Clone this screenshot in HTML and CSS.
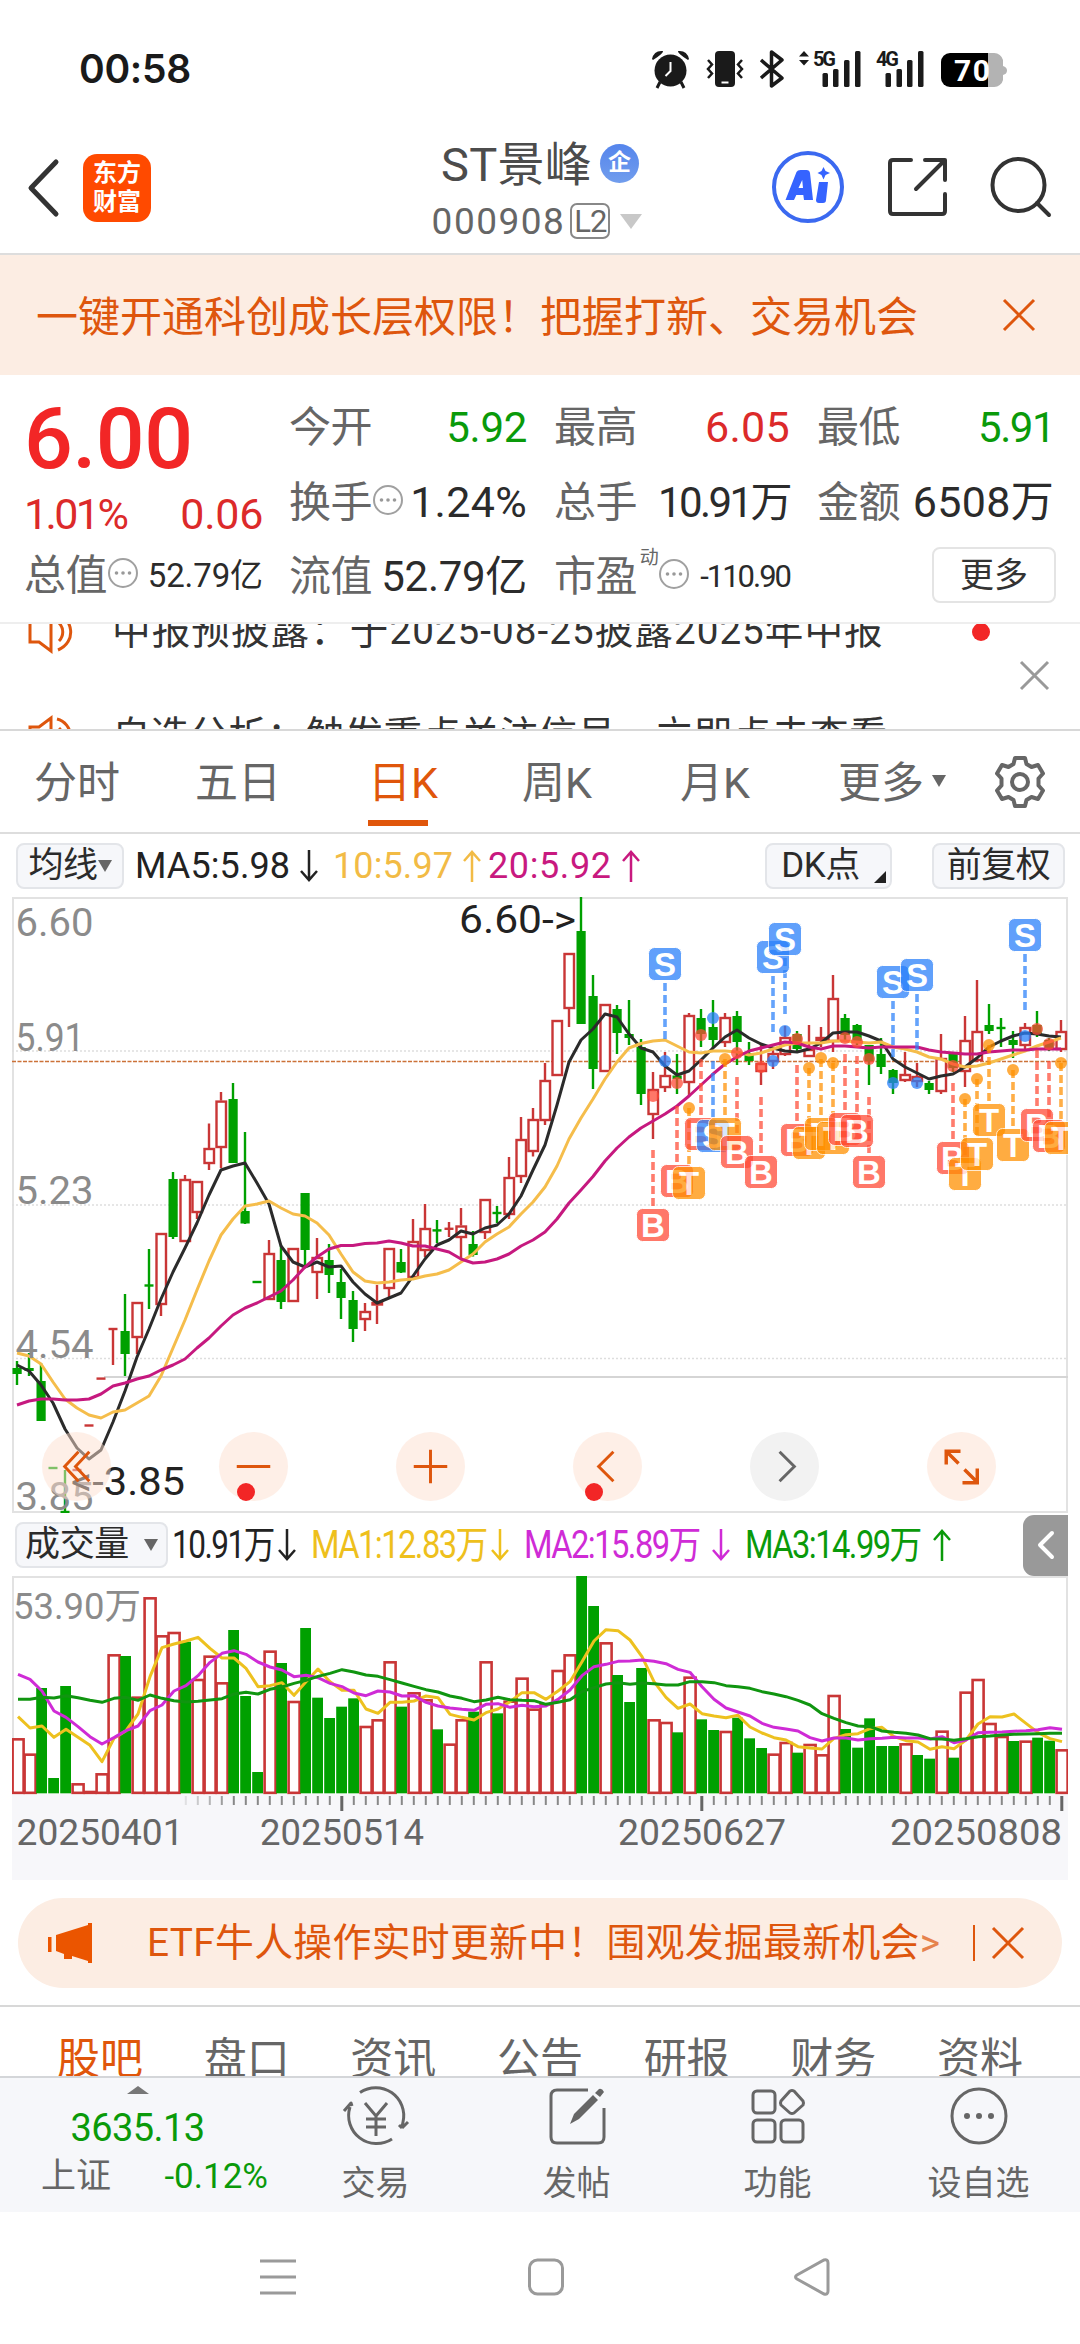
FILE: index.html
```html
<!DOCTYPE html>
<html lang="zh-CN">
<head>
<meta charset="utf-8">
<title>ST景峰 000908</title>
<link rel="stylesheet" href="styles.css">
</head>
<body>
<svg class="defs" aria-hidden="true">
  <symbol id="down" viewBox="0 0 20 34"><path d="M10 1v30M2 22l8 9 8-9"/></symbol>
  <symbol id="up" viewBox="0 0 20 34"><path d="M10 33V3M2 12l8-9 8 9"/></symbol>
  <symbol id="more" viewBox="0 0 32 32"><circle cx="16" cy="16" r="14" fill="none" stroke="#a0a0a0" stroke-width="2"/><g fill="#999"><circle cx="9.500" cy="16" r="1.800"/><circle cx="16" cy="16" r="1.800"/><circle cx="22.500" cy="16" r="1.800"/></g></symbol>
  <symbol id="horn" viewBox="0 0 54 44"><path d="M3 12h9L24 3v38L12 32H3zM32 13c5 5 5 13 0 18M30 4c16 4 20 28 1 36"/></symbol>
</svg>

<header class="status">
  <span class="clock">00:58</span>
  <svg class="status-icons" viewBox="0 0 360 40" width="360" height="40">
    <g fill="#1a1a1a">
      <circle cx="20.500" cy="20.500" r="16"/>
      <path d="M2 9Q4 0 13 1Q14 3 3 10ZM39 9Q37 0 28 1Q27 3 38 10Z"/>
      <path d="M10 32l-3 6M31 32l3 6" stroke="#1a1a1a" stroke-width="3"/>
      <rect x="65" y="1" width="20" height="36" rx="4"/>
      <path d="M149 6.500l5-5.500 5 5.500zM149 10l5 5.500 5-5.500z"/>
      <rect x="172.500" y="23" width="5.500" height="14" rx="1.500"/><rect x="183" y="19" width="5.500" height="18" rx="1.500"/><rect x="194" y="10" width="5.500" height="27" rx="1.500"/><rect x="205" y="1" width="5.500" height="36" rx="1.500"/>
      <rect x="235.500" y="23" width="5.500" height="14" rx="1.500"/><rect x="246.500" y="19" width="5.500" height="18" rx="1.500"/><rect x="257" y="10" width="5.500" height="27" rx="1.500"/><rect x="268" y="1" width="5.500" height="36" rx="1.500"/>
    </g>
    <path d="M20.500 12v9l-5 5" fill="none" stroke="#fff" stroke-width="2"/>
    <path d="M71.500 32.500h7" stroke="#fff" stroke-width="2"/>
    <path d="M58 10l4 4.500-4 4.500 4 4.500-4 4.500M92 10l-4 4.500 4 4.500-4 4.500 4 4.500" fill="none" stroke="#1a1a1a" stroke-width="2.500"/>
    <path d="M111 10l21 18-10.500 8V2L132 10 111 28" fill="none" stroke="#1a1a1a" stroke-width="3.500" stroke-linejoin="round"/>
    <text class="net" x="163" y="16" textLength="23">5G</text>
    <text class="net" x="226" y="16" textLength="23">4G</text>
    <path d="M338 3h6a9 9 0 0 1 9 7v6q4 1 4 4.500t-4 4.500v5a9 9 0 0 1-9 7h-6z" fill="#b3b3b3"/>
    <path d="M338 3v34h-38a9 9 0 0 1-9-9V12a9 9 0 0 1 9-9z"/>
    <text class="charge" x="304" y="31" textLength="36">70</text>
  </svg>
</header>

<nav class="titlebar">
  <div class="left">
    <svg width="34" height="60" viewBox="0 0 34 60" class="line"><path d="M29 4L4 30l25 26" stroke-width="5"/></svg>
    <div class="logo"><span>东方</span><span>财富</span></div>
  </div>
  <div class="name">
    <div class="name-row">ST景峰<span class="corp">企</span></div>
    <div class="code-row"><span class="code">000908</span><span class="level">L2</span><i class="tri light"></i></div>
  </div>
  <div class="actions">
    <svg width="74" height="74" viewBox="0 0 74 74">
      <circle cx="37" cy="37" r="34" fill="#fff" stroke="#3b69f0" stroke-width="4"/>
      <path d="M14.500 50L25.500 22q1-2 4-2h6q3 0 3.500 3L42 50h-9l-.7-5h-7L23 50zM27.500 38h4.500l-.8-8z" fill="#3563ff" fill-rule="evenodd"/>
      <path d="M48 32h9l-2 18q0 3-3 3h-4q-3 0-3-3zM52.500 17l2 4 4.500 2-4.500 2-2 4.500-2-4.500-4-2 4-2z" fill="#3563ff"/>
    </svg>
    <svg width="62" height="62" viewBox="0 0 62 62" class="line"><path d="M24 4H6Q3 4 3 7v48q0 3 3 3h49q3 0 3-3V38M38 4h20v20M57 5L29 33" stroke-width="4"/></svg>
    <svg width="62" height="62" viewBox="0 0 62 62" class="line"><circle cx="28.500" cy="29" r="26" stroke-width="4"/><path d="M47 47l12 12" stroke-width="4"/></svg>
  </div>
</nav>

<section class="promo">
  <span>一键开通科创成长层权限！把握打新、交易机会</span>
  <svg width="34" height="34" viewBox="0 0 34 34"><path d="M2 2l30 30M32 2L2 32"/></svg>
</section>

<section class="quote">
  <div class="price-col">
    <div class="price">6.00</div>
    <div class="pair red"><span class="pct">1.01%</span><span>0.06</span></div>
    <div class="pair"><span class="lbl">总值<svg class="dots"><use href="#more"/></svg></span><span class="v-small">52.79亿</span></div>
  </div>
  <div class="grid">
    <div class="pair"><span class="lbl">今开</span><span class="green">5.92</span></div>
    <div class="pair"><span class="lbl">最高</span><span class="red wide">6.05</span></div>
    <div class="pair"><span class="lbl">最低</span><span class="green n1">5.91</span></div>
    <div class="pair"><span class="lbl">换手<svg class="dots"><use href="#more"/></svg></span><span class="wide">1.24%</span></div>
    <div class="pair"><span class="lbl">总手</span><span class="n2">10.91万</span></div>
    <div class="pair"><span class="lbl">金额</span><span class="wide">6508万</span></div>
    <div class="pair"><span class="lbl">流值</span><span>52.79亿</span></div>
    <div class="pair"><span class="lbl">市盈<sup>动</sup><svg class="dots"><use href="#more"/></svg></span><span class="v-pe">-110.90</span></div>
    <div class="more-cell"><button class="more-btn">更多</button></div>
  </div>
</section>

<section class="notices">
  <div class="notice-list">
    <div class="notice"><svg class="horn"><use href="#horn"/></svg><span class="report">中报预披露：于2025-08-25披露2025年中报</span><i class="dot"></i></div>
    <div class="notice"><svg class="horn"><use href="#horn"/></svg><span>自选分析：触发重点关注信号，立即点击查看</span></div>
  </div>
  <svg class="close" width="32" height="32" viewBox="0 0 32 32"><path d="M2 2l27 27M29 2L2 29"/></svg>
</section>

<nav class="periods">
  <span>分时</span><span class="w2">五日</span><span class="on">日K</span><span>周K</span><span>月K</span><span>更多<i class="tri small"></i></span>
  <svg class="gear" width="50" height="54" viewBox="0 0 54 54"><path d="M22 3h10l1.500 6 5 3 6.500-2 5 8.500-4.500 5v7l4.500 5-5 8.500-6.500-2-5 3L32 51H22l-1.500-6-5-3L9 44l-5-8.500 4.500-5v-7L4 18.500 9 10l6.500 2 5-3z"/><circle cx="27" cy="27" r="8"/></svg>
</nav>

<section class="indicators">
  <span class="pill">均线<i class="tri"></i></span>
  <span class="ma k">MA5:5.98<svg><use href="#down"/></svg></span>
  <span class="ma y">10:5.97<svg><use href="#up"/></svg></span>
  <span class="ma m">20:5.92<svg><use href="#up"/></svg></span>
  <span class="pill dk">DK点<i class="corner"></i></span>
  <span class="pill fq">前复权</span>
</section>

<section class="kline">
  <svg id="kline" viewBox="0 0 1056 616" width="1056" height="616"></svg>
  <div class="controls">
    <button><svg viewBox="0 0 70 70"><path d="M37 20L23 35l14 15M48 20L34 35l14 15"/></svg></button>
    <button><svg viewBox="0 0 70 70"><path d="M18 35h34"/></svg><i class="dot"></i></button>
    <button><svg viewBox="0 0 70 70"><path d="M18 35h34M35 18v34"/></svg></button>
    <button><svg viewBox="0 0 70 70"><path d="M41 20L26 35l15 15"/></svg><i class="dot shifted"></i></button>
    <button class="off"><svg viewBox="0 0 70 70"><path d="M30 20l15 15-15 15"/></svg></button>
    <button><svg viewBox="0 0 70 70"><path d="M19.500 33V19.500H34M20 20l12 12M38 38l12 12M51 37v14.500H36" stroke-width="3.500"/></svg></button>
  </div>
</section>

<section class="vol-head">
  <span class="pill vol">成交量<i class="tri"></i></span>
  <span class="ma k"><b>10.91万</b><svg><use href="#down"/></svg></span>
  <span class="ma g1"><b>MA1:12.83万</b><svg><use href="#down"/></svg></span>
  <span class="ma p"><b>MA2:15.89万</b><svg><use href="#down"/></svg></span>
  <span class="ma g"><b>MA3:14.99万</b><svg><use href="#up"/></svg></span>
  <span class="handle"><svg width="20" height="30" viewBox="0 0 20 30"><path d="M16 3L4 15l12 12"/></svg></span>
</section>
<section class="volume">
  <svg id="volume" viewBox="0 0 1056 304" width="1056" height="304"></svg>
</section>

<section class="etf">
  <svg width="46" height="40" viewBox="0 0 46 40"><path d="M0 14h3.500v15H0zM8 12L40 2V0h4v40h-4v-2l-16-5v3h-8v-5l-8-3z" fill="#eb5500"/></svg>
  <span class="etf-text">ETF牛人操作实时更新中！围观发掘最新机会<b>&gt;</b></span>
  <i class="bar"></i>
  <svg width="34" height="34" viewBox="0 0 34 34" class="x"><path d="M2 2l30 30M32 2L2 32"/></svg>
</section>

<nav class="tabs"><span class="on">股吧</span><span>盘口</span><span>资讯</span><span>公告</span><span>研报</span><span>财务</span><span>资料</span></nav>

<footer class="dock">
  <div class="index">
    <i class="tri up"></i>
    <div class="idx">3635.13</div>
    <div class="idx-row"><span>上证</span><span class="green">-0.12%</span></div>
  </div>
  <div class="item"><svg viewBox="0 0 68 60"><path d="M18 6.500A28 28 0 0 1 61 36l-1 5M60 42l-3-3M60 42l6-6M50 53A28 28 0 0 1 8 21M2 25l7-8 1 3M23 17l11 13 11-13M34 30v20M24 33h20M24 41h20"/></svg><span>交易</span></div>
  <div class="item"><svg viewBox="0 0 68 60"><path d="M45 4H14Q8 4 8 10v41q0 6 6 6h41q6 0 6-6V22"/><path d="M27 38l4-10L50 9l5 5-19 19zM52 7l4-4q3-1 5 3l-4 5z" fill="#666" stroke="none"/></svg><span>发帖</span></div>
  <div class="item"><svg viewBox="0 0 68 60"><rect x="9" y="5" width="22" height="22" rx="4"/><rect x="9" y="34" width="22" height="22" rx="4"/><rect x="37" y="34" width="22" height="22" rx="4"/><path d="M46 5l-9 10q-1 2 0 4l9 8q2 1 4 0l9-8q1-2 0-4l-9-10q-2-1-4 0z"/></svg><span>功能</span></div>
  <div class="item"><svg viewBox="0 0 68 60"><circle cx="34" cy="30" r="27"/><g fill="#666" stroke="none"><circle cx="22" cy="30" r="3"/><circle cx="34" cy="30" r="3"/><circle cx="46" cy="30" r="3"/></g></svg><span>设自选</span></div>
</footer>

<div class="sysnav">
  <svg width="40" height="40" viewBox="0 0 40 40"><path d="M2 4h36M2 20h36M2 36h36"/></svg>
  <svg width="40" height="40" viewBox="0 0 40 40"><rect x="3.500" y="3" width="33" height="34" rx="8"/></svg>
  <svg width="40" height="40" viewBox="0 0 40 40"><path d="M32 3Q36 2 36 6v28q0 4-4 3L5 22q-3-2 0-4z"/></svg>
</div>
<script src="chart.js"></script>
</body>
</html>
```
FILE: styles.css
```css
* { box-sizing: border-box; }
body { margin: 0; width: 1080px; height: 2344px; overflow: hidden; background: #fff; color: #2b2b2b; font-family: Roboto, "Noto Sans CJK SC", sans-serif; line-height: 1; }
button { font: inherit; color: inherit; padding: 0; border: 0; background: none; }
.defs { position: absolute; width: 0; height: 0; }
.line { fill: none; stroke: #333; stroke-linecap: round; stroke-linejoin: round; }
.red { color: #dc2a2a; }
.green { color: #0a9a0a; }
i { font-style: normal; display: inline-block; }
.tri { width: 0; height: 0; border: solid transparent; border-width: 12px 7px 0; border-top-color: #666; }
.tri.light { border-width: 15px 11px 0; border-top-color: #c8c8c8; margin-left: 10px; }
.dot { width: 18px; height: 18px; border-radius: 50%; background: #f22626; }

.status { height: 136px; display: flex; justify-content: space-between; padding: 50px 70px 0 79px; }
.clock { font: 600 39px/38px Inter, sans-serif; color: #1a1a1a; letter-spacing: -.3px; }
.status-icons { flex: none; }
.net { font: 700 20px Roboto, sans-serif; fill: #1a1a1a; }
.charge { font: 700 30px Roboto, sans-serif; fill: #fff; }

.titlebar { height: 119px; border-bottom: 2px solid #ddd; display: grid; grid-template-columns: 380px 320px 1fr; }
.left { display: flex; gap: 22px; padding-left: 27px; height: 103px; align-items: center; }
.logo { width: 68px; height: 68px; border-radius: 14px; background: #ff4a00; color: #fff; font-size: 24px; font-weight: 700; display: flex; flex-direction: column; align-items: center; justify-content: center; gap: 5px; }
.name { display: flex; flex-direction: column; align-items: center; color: #4c4c4c; }
.name-row { font-size: 47px; height: 56px; display: flex; align-items: center; gap: 8px; white-space: nowrap; letter-spacing: .3px; }
.corp { width: 39px; height: 39px; border-radius: 50%; background: linear-gradient(#5585ec, #719ded); color: #fff; font-size: 23px; font-weight: 700; line-height: 38px; text-align: center; margin-top: -2px; }
.code-row { display: flex; align-items: center; height: 58px; color: #666; padding-right: 12px; margin-left: 6px; }
.code { font-size: 37px; letter-spacing: 1.500px; }
.level { border: 2px solid #888; border-radius: 7px; width: 40px; height: 36px; font-size: 31px; line-height: 34px; text-align: center; margin-left: 5px; letter-spacing: -1px; }
.actions { display: flex; align-items: center; justify-content: space-between; height: 102px; padding: 0 28px 0 71px; }

.promo { height: 120px; background: #fcede3; color: #de560d; display: flex; align-items: center; justify-content: space-between; padding: 0 44px 0 36px; font-size: 42px; }
.promo span { padding-top: 5px; }
.promo svg, .etf .x { fill: none; stroke: #de560d; stroke-width: 3; }

.quote { height: 249px; display: flex; border-bottom: 2px solid #eee; padding: 15px 24px 0 24px; font-size: 42px; }
.price-col { width: 239px; margin-right: 26px; padding-top: 2px; }
.price { font-size: 86px; font-weight: 500; color: #f22626; height: 92px; line-height: 94px; letter-spacing: -.5px; }
.pair { display: flex; justify-content: space-between; align-items: center; height: 75px; white-space: nowrap; letter-spacing: -.3px; }
.price-col .pair.red { height: 60px; margin-bottom: -6px; font-size: 43px; }
.pct { letter-spacing: -2.600px; }
.lbl { color: #666; letter-spacing: -.6px; display: flex; align-items: center; }
.dots { width: 32px; height: 32px; margin-top: -6px; flex: none; }
.v-small { font-size: 33px; letter-spacing: -.1px; }
.v-pe { font-size: 31px; letter-spacing: -2px; }
.pair .n1 { letter-spacing: -1.500px; }
.pair .n2 { letter-spacing: -2.600px; }
.pair .wide { font-size: 43px; letter-spacing: .3px; }
.lbl sup { font-size: 19px; align-self: flex-start; line-height: 18px; margin: -7px 0 0 3px; }
.grid { flex: 1; display: grid; grid-template-columns: 238px 236px 237px; column-gap: 27px; grid-template-rows: 75px 74px 74px; }
.more-cell { display: flex; justify-content: flex-end; align-items: center; margin-right: -2px; }
.more-btn { width: 124px; height: 56px; border: 2px solid #e4e4e4; border-radius: 8px; font-size: 34px; color: #333; margin-top: -2px; }

.notices { height: 107px; overflow: hidden; display: flex; border-bottom: 2px solid #d8d8d8; color: #333; position: relative; }
.notice-list { flex: 1; margin-top: -45px; }
.notice { height: 105px; display: flex; align-items: center; font-size: 38.600px; padding-left: 27px; white-space: nowrap; letter-spacing: .2px; }
.report { letter-spacing: 1.050px; }
.notice .horn { width: 54px; height: 44px; margin-right: 31px; fill: none; stroke: #de560d; stroke-width: 3; }
.notice .dot { margin-left: auto; margin-right: 90px; }
.close { position: absolute; right: 29px; top: 36px; fill: none; stroke: #999; stroke-width: 3; }

.periods { height: 103px; border-bottom: 2px solid #ddd; display: flex; align-items: center; padding: 0 0 0 34px; font-size: 43px; color: #666; white-space: nowrap; }
.periods span { width: 158px; height: 101px; display: flex; align-items: center; padding-top: 4px; }
.periods span:first-child { width: 161px; }
.periods .w2 { width: 173px; }
.periods .on { width: 154px; color: #e0560b; background: linear-gradient(#e0560b, #e0560b) 0 89px / 60px 6px no-repeat; }
.tri.small { border-width: 12px 7px 0; margin-left: 8px; margin-top: -6px; }
.gear { fill: none; stroke: #666; stroke-width: 4; stroke-linejoin: round; margin-left: -3px; flex: none; width: 54px; }

.indicators { height: 63px; display: flex; align-items: center; padding: 0 15px 0 16px; font-size: 36px; white-space: nowrap; }
.pill { height: 46px; background: #f6f7fa; border: 2px solid #e3e5e9; border-radius: 8px; display: flex; align-items: center; justify-content: center; font-size: 35px; letter-spacing: -.5px; width: 108px; }
.ma { display: flex; align-items: center; gap: 9px; }
.ma svg { width: 20px; height: 34px; fill: none; stroke: currentColor; stroke-width: 2.500; flex: none; }
.ma b { font-weight: 400; display: block; transform: scaleX(.86); transform-origin: left; }
.k { color: #222; }
.indicators .k { margin-left: 11px; width: 198px; letter-spacing: .1px; }
.y { color: #f2bb45; width: 155px; letter-spacing: .1px; }
.m { color: #c8197f; width: 156px; letter-spacing: .6px; }
.indicators .dk { width: 127px; margin-left: auto; margin-right: 40px; position: relative; padding-right: 16px; }
.fq { width: 133px; }
.corner { position: absolute; right: 4px; bottom: 4px; width: 0; height: 0; border: solid transparent; border-width: 0 0 12px 12px; border-bottom-color: #222; }

.kline { padding-left: 12px; height: 616px; position: relative; }
.kline > svg, .volume > svg { display: block; }
.controls { position: absolute; left: 42px; right: 84px; top: 535px; display: flex; justify-content: space-between; }
.controls button { width: 69px; height: 69px; border-radius: 50%; background: rgba(253, 224, 208, .5); position: relative; }
.controls svg { width: 69px; height: 69px; display: block; fill: none; stroke: #de560d; stroke-width: 3; }
.controls .off { background: #f2f2f2; }
.controls .off svg { stroke: #666; }
.controls .dot { position: absolute; left: 18px; bottom: 0; }
.controls .dot.shifted { left: 12px; }
text { font-family: Roboto, "Noto Sans CJK SC", sans-serif; }
.badge text { font: 700 33px "Liberation Sans", sans-serif; fill: #fff; text-anchor: middle; }

.vol-head { height: 63px; display: flex; align-items: center; padding-left: 15px; font-size: 38px; white-space: nowrap; letter-spacing: -1.800px; }
.vol { width: 153px; gap: 15px; letter-spacing: -.4px; margin-right: 4px; }
.vol-head .ma { justify-content: space-between; padding-right: 14px; gap: 0; }
.vol-head b { width: 0; }
.vol-head .k { width: 139px; }
.vol-head .k b { transform: scaleX(.83); }
.g1 { color: #eec01c; width: 213px; }
.p { color: #cf2bd6; width: 221px; }
.g { color: #0a9a0a; width: 221px; }
.handle { margin: 1px 12px 0 auto; width: 45px; height: 61px; background: #999; border-radius: 11px 0 0 11px; display: flex; align-items: center; justify-content: center; }
.handle svg { fill: none; stroke: #fff; stroke-width: 4; stroke-linecap: round; stroke-linejoin: round; }
.volume { padding-left: 12px; height: 304px; }

.etf { margin: 18px 18px 17px; height: 90px; border-radius: 45px; background: #fcede3; color: #de560d; display: flex; align-items: center; padding: 0 37px 0 30px; font-size: 38.800px; white-space: nowrap; letter-spacing: .35px; }
.etf-text { margin-left: 53px; flex: 1; }
.etf-text b { font-weight: 400; opacity: .7; }
.bar { width: 2px; height: 36px; background: #de560d; margin-right: 16px; }

.tabs { height: 71px; overflow: hidden; border-top: 2px solid #d8d8d8; display: flex; justify-content: space-between; padding: 29px 57px 0; font-size: 43px; line-height: 46px; color: #666; }
.tabs .on { color: #e0560b; }
.dock { height: 136px; background: #f6f7fa; border-top: 2px solid #d4d6d9; display: flex; color: #666; font-size: 34px; }
.index { width: 275px; display: flex; flex-direction: column; align-items: center; }
.tri.up { border-width: 0 11px 8px; border-bottom-color: #777; margin-top: 8px; }
.idx { color: #0a9a0a; font-size: 38px; letter-spacing: -.6px; margin-top: 15px; }
.idx-row { display: flex; justify-content: space-between; width: 227px; margin: 12px 0 0 41px; align-self: flex-start; align-items: center; font-size: 35px; }
.item { width: 201px; display: flex; flex-direction: column; align-items: center; padding-top: 8px; gap: 20px; }
.item svg { width: 68px; height: 60px; fill: none; stroke: #666; stroke-width: 3; stroke-linejoin: round; }
.sysnav { height: 132px; display: flex; align-items: center; padding: 0 0 2px 258px; gap: 228px; }
.sysnav svg { fill: none; stroke: #9a9a9a; stroke-width: 3; }
.sysnav svg:last-child { margin-left: -2px; }
```
FILE: chart.js
```js
// Daily K-line and volume panels. All y values are px from the panel top.
var RED = '#c93636', GREEN = '#00a000', STEP = 12;

// [up?, high, bodyTop, bodyBottom, low] ; equal top/bottom draws a dash
var candles = [
[0,464,471,477,488],[0,456,471,474,479],[0,466,484,524,524],[0,571,571,571,571],[0,573,615,615,615],[1,573,573,573,573],[1,528.5,528.5,528.5,528.5],[1,481.6,481.6,481.6,481.6],
[1,432,432,432,468],[0,397,434,457,479],[1,405,405,441,457],[0,352,388.5,388.5,412],[1,336,336,408,419],[0,275,282,340,342],[1,278,282,345,345],[1,284,284,316,322],
[1,226.5,251,267,273],[1,195,203.6,251,271],[0,186,202,266,266],[0,235,314,326.5,327],[0,385,385,385,385],[1,343,356,403,403],[0,348,363,405,412],[1,351,351,405,405],
[0,296,296,353,371],[1,341,360,376,402],[0,347,363,378,396],[0,372,385,401,422],[0,394,403,432,445],[1,406,414,423,434],[1,388,405,408.5,427],[1,351,351,392,401],
[0,352,365,375.5,376],[1,322,344,381,381],[1,307,331,354,360],[0,323,333.4,333.4,346],[1,325,331.8,331.8,340],[1,311,328.5,341,362],[0,334,347,358,359.5],[1,302,302,336,342],
[0,309,316,316,326],[1,260,280,318,322],[1,220,242,280,286],[1,211,222,255,259.5],[1,166,183,224,228],[1,123,123,179,179],[1,56,56,112,130],[0,0,34,127,127],
[0,78,99,172,192],[1,107,107,175,175],[0,108,112,136,157],[0,103,137,141,148],[0,142,150,197,208],[1,175,192,218,242],[1,155,178,191,195],[0,157,178.5,182,197],
[1,116,118,186,200],[0,112,121,137,150],[0,103,130,143,151],[1,116,120,146,150],[0,114,119,145,168],[0,145,156,164,168],[1,146,166,175,188],[1,150,156,165,172],
[1,129,140,158,159],[0,134,137,152,156],[1,128,152,160,160],[1,130,140,144,150],[1,78,101,145,155],[0,117,121,138,143],[0,127,128,145,148],[0,148,148,164,188],
[0,141,157,170,177],[0,172,173,186,197],[1,155,177,184,185],[1,166,179,185,190],[0,184,186,193,197],[1,137,161,195,197],[0,156,157,171,175],[1,119,143,175,190],
[1,83,134,164,165],[0,107,128,134,137],[0,121,131,131,150],[0,134,143,148,161],[1,126,130,149,152],[0,114,128,138,140],[0,141,143,152,154],[1,123,134,153,155]];

var ma = {
'#2b2b2b': [468,474,488,506,532,551,562,553,525,494,460,432,402,375,351,326,298,273,269,266,286,307,349,365,370,365,370,369,385,397,406,401,396,379,362,348,343,334,337,331,328,317,299,273,248,208,165,143,132,117,120,137,151,155,169,178,174,163,151,140,133,141,147,151,154,155,152,146,136,135,135,139,144,162,170,176,182,179,177,170,161,150,144,139,136,137,139,140],
'#f5bd4b': [456,459,467,485,502,511,518,521,515,513,506,499,479,451,423,393,364,338,322,309,307,304,311,317,319,326,338,357,375,384,386,385,383,382,379,377,373,365,357,345,337,330,317,305,290,269,242,221,202,182,165,151,146.5,144,143,149,155,156,154,154,155,158,156,152,148,146,146,146,144,144,145,146,145,150,152,155,160,162,167,170,169,166,162,158,154,149,145,141],
'#c6197f': [508,504,502,502,503,503,502,497,489,486,482,479,473,468,462,451,441,429,418,411,406,400,394,383,370,360,352,348.500,348.500,346.500,346,344,346,349,349,352,355,362,366,365,362,357,349,343,335,322,306,293,279.500,264,251,240,231,224,217,209,199,188,177,167,160,154,151,148,145,146,150,152,149,149,150,151,150,150,150,150,153,155,156,157,157,155,154,153,153,152,152,152]
};

// [day, kind, badge centre y, dot y]
var trades = [
[53,'B',328,199],[54,'S',67,164],[55,'B',284,186],[56,'T',286,211],[57,'B',237,138],[58,'S',239,121,1],[59,'T',237,162],[60,'B',255,156],[62,'B',275,170],
[63,'S',60,164],[64,'S',42,134],[65,'B',243,142],[66,'T',246,171],[67,'T',237,161],[68,'T',241,166],[69,'B',232,141],[70,'B',234,145],[71,'B',275,162],
[73,'S',85,186],[75,'S',78,186],[78,'B',261,169],[79,'T',277,202],[80,'T',257,182],[81,'T',223,148],[83,'T',248,173],[84,'S',38,139],[85,'B',228,132],[86,'B',239,147],[87,'T',241,166]];
var tone = { B: '#ff4a35', S: '#2a80fa', T: '#ff9000' };

// Volume samples, in thirds of a px on a 198..850 scale; negative means a falling day
var volumes = [685,731,-534,-804,-528,820,843,790,433,-438,560,262,376,366,-395,507,437,517,-360,-558,-786,422,-459,573,-354,-563,-624,-590,-565,648,628,454,-590,547,568,-658,701,628,-605,454,-610,572,503,596,580,480,433,-198,-288,397,-495,-576,-474,628,636,-667,500,-628,-660,663,-623,-685,-714,731,696,-728,702,733,555,-657,-713,-625,-708,-708,700,-735,-746,662,-743,545,507,639,678,-693,692,-683,-692,718];
var volMa = {
'#edc11f': [620,654,648,682,658,682,706,755,685,662,612,500,413,402,393,382,415,444,444,475,530,527,518,556,515,477,515,541,541,597,610,577,577,573,558,563,613,622,630,608,597,575,548,548,568,543,515,455,393,359,362,390,440,515,562,595,582,611,618,623,616,651,669,683,690,710,714,717,685,674,671,656,652,680,692,696,718,710,716,690,642,620,621,612,640,668,686,695],
'#cf2bd6': [493,508,543,603,622,650,680,702,683,662,648,602,585,543,527,497,457,430,422,433,456,471,480,500,496,503,520,530,549,557,543,546,558,557,577,588,594,598,601,583,581,592,586,590,588,568,540,497,470,463,454,453,450,454,461,478,487,530,568,594,606,618,640,652,657,663,683,693,684,684,690,686,685,682,684,684,687,680,698,690,668,667,666,664,662,659,653,658],
'#109510': [568,568,562,564,557,563,571,577,565,562,571,555,565,572,576,574,570,566,552,547,552,538,531,520,511,499,490,479,486,495,499,509,519,529,539,546,558,565,575,570,562,569,571,572,583,577,569,545,533,522,518,523,519,521,525,525,515,515,518,527,530,535,545,552,560,571,585,611,625,638,648,650,663,667,670,675,686,687,691,686,680,678,675,673,672,671,670,670]
};

function line(x1, y1, x2, y2, stroke, w, extra) {
  return '<path d="M' + x1 + ' ' + y1 + 'L' + x2 + ' ' + y2 + '" stroke="' + stroke + '" stroke-width="' + w + '" ' + (extra || '') + '/>';
}
function label(x, y, size, width, text, fill) {
  return '<text x="' + x + '" y="' + y + '" font-size="' + size + '" textLength="' + width + '" lengthAdjust="spacingAndGlyphs" fill="' + fill + '">' + text + '</text>';
}
function curve(values, x0, map, color) {
  var pts = values.map(function (v, i) { return (x0 + STEP * i) + ',' + map(v); }).join(' ');
  return '<polyline points="' + pts + '" fill="none" stroke="' + color + '" stroke-width="3" stroke-linejoin="round"/>';
}

function drawKline() {
  var s = '<path d="M1 616V1H1055V616" fill="none" stroke="#e2e2e2" stroke-width="2"/>';
  s += line(0, 615, 1056, 615, '#e2e2e2', 2);
  [154, 308, 461.5].forEach(function (y) { s += line(0, y, 1056, y, '#dedede', 1.5, 'stroke-dasharray="2 2"'); });
  s += line(92, 480, 1056, 480, '#d5d5d5', 2);
  s += line(0, 164.500, 1056, 164.500, '#cc7238', 1.5, 'stroke-dasharray="4 1.5"');
  candles.forEach(function (c, i) {
    var x = 5 + STEP * i, col = c[0] ? RED : GREEN;
    if (c[2] === c[3]) {
      s += line(x, c[1], x, c[4], col, 2.4) + line(x - 4.5, c[2], x + 4.5, c[2], col, 2.4);
    } else if (c[0]) {
      s += line(x, c[1], x, c[2], col, 2.4) + line(x, c[3], x, c[4], col, 2.4);
      s += '<rect x="' + (x - 4.5) + '" y="' + (c[2] + 1) + '" width="9.500" height="' + Math.max(1, c[3] - c[2] - 2) + '" fill="#fff" stroke="' + col + '" stroke-width="2.400"/>';
    } else {
      s += line(x, c[1], x, c[4], col, 2.4);
      s += '<rect x="' + (x - 4.5) + '" y="' + c[2] + '" width="9.200" height="' + (c[3] - c[2]) + '" fill="' + col + '"/>';
    }
  });
  for (var color in ma) s += curve(ma[color], 5, function (v) { return v; }, color);
  trades.forEach(function (t) {
    var x = 5 + STEP * t[0], down = t[1] === 'S' && !t[4] ? 1 : -1;
    s += line(x, t[2] + down * (down > 0 ? 19 : 75), x, t[2] + down * (down > 0 ? 75 : 19), tone[t[1]], 3.6, 'stroke-dasharray="8 4" opacity=".72"');
    s += '<circle cx="' + x + '" cy="' + t[3] + '" r="6" fill="' + tone[t[1]] + '" opacity=".75"/>';
  });
  trades.forEach(function (t) {
    var x = 5 + STEP * t[0];
    s += '<g class="badge" opacity=".74"><rect x="' + (x - 16.5) + '" y="' + (t[2] - 16.5) + '" width="33" height="33" rx="6" fill="' + tone[t[1]] + '" stroke="#fff" stroke-width="1"/><text x="' + x + '" y="' + (t[2] + 12) + '">' + t[1] + '</text></g>';
  });
  [['6.60', 38.5], ['5.91', 153.5], ['5.23', 307], ['4.54', 461], ['3.85', 612.5]].forEach(function (a) {
    s += label(3.500, a[1], 39, a[0] === '5.91' ? 69 : 78, a[0], '#8b8b8b');
  });
  s += label(447, 36, 39, 117, '6.60-&gt;', '#222') + label(59, 598, 38, 114, '&lt;-3.85', '#222');
  document.getElementById('kline').innerHTML = s;
}

function drawVolume() {
  var y = function (v) { return v / 3 - 66; }, base = y(850);
  var s = '<rect y="218" width="1056" height="86" fill="#f7f7fa"/>';
  s += '<path d="M1 218V1H1055V218" fill="none" stroke="#e2e2e2" stroke-width="2"/>';
  s += label(1, 43, 36, 128, '53.90万', '#8b8b8b');
  volumes.forEach(function (v, i) {
    var x = 5.6 + STEP * i, top = y(Math.abs(v));
    s += v < 0
      ? '<rect x="' + (x - 5.4) + '" y="' + top + '" width="10.800" height="' + (base - top) + '" fill="' + GREEN + '"/>'
      : '<rect x="' + (x - 5) + '" y="' + (top + 1) + '" width="11" height="' + Math.max(0.5, base - top - 1.5) + '" fill="#fff" stroke="' + RED + '" stroke-width="2.600"/>';
  });
  for (var color in volMa) s += curve(volMa[color], 6, y, color);
  for (var i = 14; i < 88; i++) {
    var major = i === 27 || i === 57 || i === 87;
    s += line(5.8 + STEP * i, 220, 5.8 + STEP * i, major ? 235 : 229, major ? '#666' : '#888', major ? 3 : 2, 'opacity="' + Math.min(1, (i - 13) / 5) + '"');
  }
  s += label(4.5, 268.5, 36, 167, '20250401', '#666') + label(248, 268.5, 36, 164, '20250514', '#666');
  s += label(606, 268.5, 36, 168, '20250627', '#666') + label(878, 268.5, 36, 172, '20250808', '#666');
  document.getElementById('volume').innerHTML = s;
}

drawKline();
drawVolume();
```
